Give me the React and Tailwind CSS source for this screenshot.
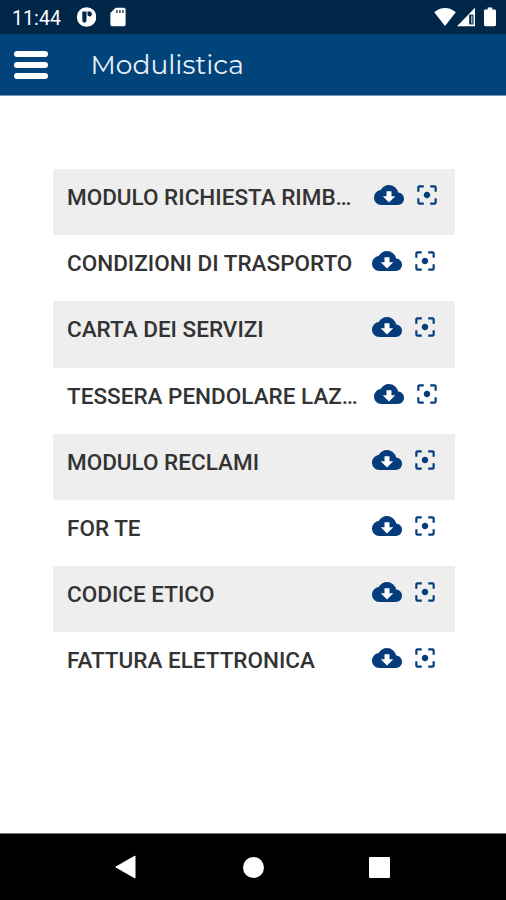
import { MdCloudDownload, MdFilterCenterFocus } from "react-icons/md"

const documents = [
    { title: "MODULO RICHIESTA RIMB…", truncated: true },
    { title: "CONDIZIONI DI TRASPORTO" },
    { title: "CARTA DEI SERVIZI" },
    { title: "TESSERA PENDOLARE LAZ…", truncated: true },
    { title: "MODULO RECLAMI" },
    { title: "FOR TE" },
    { title: "CODICE ETICO" },
    { title: "FATTURA ELETTRONICA" },
]

function StatusBar() {
    return (
        <div className="flex h-[34px] shrink-0 items-center bg-[#002748] pl-3 text-white">
            <span className="w-[64px] whitespace-nowrap pt-[3px] font-['Roboto',sans-serif] text-[19.5px] leading-none tracking-[0.1px]">11:44</span>
            {/* Notifications */}
            <svg className="h-5 w-5" viewBox="0 0 20 20">
                <circle cx="10.6" cy="10" r="9.8" fill="#fff" />
                <path d="M6.3 4.6h4.2v9a2.1 2.1 0 0 1-4.2 0z" fill="#002748" />
                <path d="M11.5 4.6h2a2.4 2.4 0 1 1-2 3.7z" fill="#002748" />
            </svg>
            <svg className="ml-[14px] h-5 w-4" viewBox="0 0 16 20">
                <path d="M5.6 0.8h8.3a1.7 1.7 0 0 1 1.7 1.7v15a1.7 1.7 0 0 1-1.7 1.7H2.1a1.7 1.7 0 0 1-1.7-1.7V6z" fill="#fff" />
                <path d="M6 3h1.8v3H6zM9 3h1.8v3H9zM12 3h1.8v3H12z" fill="#52677d" />
            </svg>
            {/* Wifi, signal and battery */}
            <svg className="ml-auto h-[20px] w-[22px]" viewBox="0 0 22 20">
                <path d="M11 19 .2 5.2C6.6-.5 15.4-.5 21.8 5.2z" fill="#fff" />
            </svg>
            <svg className="ml-px h-5 w-[18px]" viewBox="0 0 18 20">
                <path d="M18 .8V19.2H0z" fill="#fff" />
                <path d="M12.2 7.6h4.3v9.8h-4.3z" fill="#002748" />
                <path d="M14.4 8.5h.9v8h-.9z" fill="#fff" />
            </svg>
            <svg className="ml-[9px] mr-[10px] h-5 w-3" viewBox="0 0 12 20">
                <path d="M3.7.5h4.6v2h2.3A1.4 1.4 0 0 1 12 3.9v13.9a1.4 1.4 0 0 1-1.4 1.4H1.4A1.4 1.4 0 0 1 0 17.8V3.9a1.4 1.4 0 0 1 1.4-1.4h2.3z" fill="#fff" />
            </svg>
        </div>
    )
}

function Header() {
    return (
        <header className="flex h-[62px] shrink-0 items-center border-b border-[#7795be] bg-[#02437c] pl-[14px]">
            <button className="mt-px flex w-[34px] flex-col gap-[5px]" aria-label="Menu">
                <span className="h-[6px] w-full rounded-full bg-white" />
                <span className="h-[6px] w-full rounded-full bg-white" />
                <span className="h-[6px] w-full rounded-full bg-white" />
            </button>
            <h1 className="ml-[42.5px] pt-[2px] font-['Montserrat',sans-serif] text-[26.5px] font-normal leading-none text-[#e8f0f8]">
                Modulistica
            </h1>
        </header>
    )
}

function DocumentRow({ title, truncated }) {
    return (
        <li className="flex h-[66.1px] items-start pl-[14px] pt-[14px] odd:bg-[#eeeeee]">
            <span className="flex-1 whitespace-nowrap font-['Roboto',sans-serif] text-[22.5px] font-medium leading-[28px] text-[#333333]">
                {title}
            </span>
            <div className={`flex items-center gap-[10px] pt-px text-[#043c7c] ${truncated ? "pr-[15px]" : "pr-[17px]"}`}>
                {/* White square shows through the arrow cut-out */}
                <span className="-mt-1 bg-[linear-gradient(#fff,#fff)] bg-[length:12px_12px] bg-center bg-no-repeat">
                    <MdCloudDownload className="h-[30px] w-[30px]" />
                </span>
                <MdFilterCenterFocus className="-mt-1 h-[26px] w-[26px]" />
            </div>
        </li>
    )
}

function NavigationBar() {
    return (
        <nav className="flex h-[67px] shrink-0 items-center justify-between border-t border-[#777777] bg-black pl-[115px] pr-[116px]">
            <svg className="h-6 w-[21px]" viewBox="0 0 21 24">
                <path d="M20 1v22L.8 12z" fill="#fff" stroke="#fff" strokeLinejoin="round" />
            </svg>
            <span className="ml-px h-[21px] w-[21px] rounded-full bg-white" />
            <span className="h-[21px] w-[21px] rounded-[1px] bg-white" />
        </nav>
    )
}

export default function App() {
    return (
        <div className="flex h-[900px] w-[506px] flex-col overflow-hidden bg-white">
            <StatusBar />
            <Header />
            <main className="flex-1 pl-[53px] pr-[51.5px] pt-[73.3px]">
                <ul>
                    {documents.map((doc) => (
                        <DocumentRow key={doc.title} {...doc} />
                    ))}
                </ul>
            </main>
            <NavigationBar />
        </div>
    )
}
